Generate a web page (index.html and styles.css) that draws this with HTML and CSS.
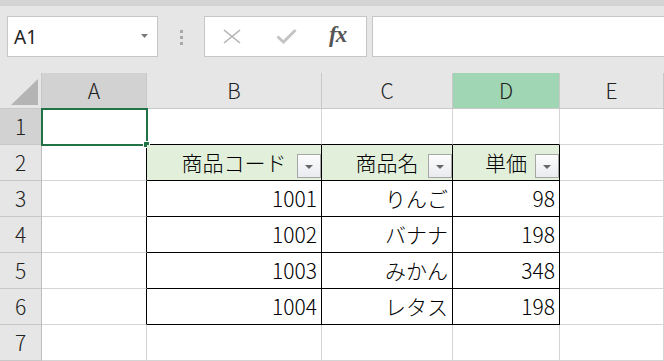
FILE: index.html
```html
<!DOCTYPE html>
<html lang="ja">
<head>
  <meta charset="UTF-8">
  <title>Sheet</title>
  <link rel="stylesheet" href="styles.css">
</head>
<body>
  <div class="app">
    <div class="topbar"></div>
    <div class="formula-row">
      <div class="namebox">
        <span>A1</span>
        <svg class="nb-arrow" width="7" height="4" viewBox="0 0 7 4"><path d="M0 0H7L3.5 4Z" fill="#7a7a7a"/></svg>
      </div>
      <div class="grip"><i></i><i></i><i></i></div>
      <div class="fbuttons">
        <svg class="ic-x" width="18" height="15" viewBox="0 0 18 15"><path d="M1 1L17 14M17 1L1 14" stroke="#b3b3b3" stroke-width="1.6" fill="none"/></svg>
        <svg class="ic-ok" width="21" height="16" viewBox="0 0 21 16"><path d="M1.5 8.5L7.5 14L19.5 2" stroke="#c4c4c4" stroke-width="3" fill="none"/></svg>
        <span class="fx">fx</span>
      </div>
      <div class="finput"></div>
    </div>

    <div class="sheet">
      <!-- column headers -->
      <div class="corner"><svg width="28" height="27" viewBox="0 0 28 27"><path d="M27 1V27H0Z" fill="#b4b4b4"/></svg></div>
      <div class="ch active">A</div>
      <div class="ch">B</div>
      <div class="ch">C</div>
      <div class="ch hl">D</div>
      <div class="ch">E</div>

      <!-- row 1 -->
      <div class="rh active">1</div>
      <div class="c a1"><span class="handle"></span></div>
      <div class="c tb"></div>
      <div class="c tb"></div>
      <div class="c tb"></div>
      <div class="c"></div>

      <!-- row 2 -->
      <div class="rh">2</div>
      <div class="c tl"></div>
      <div class="c t th">商品コード<span class="filter"></span></div>
      <div class="c t th">商品名<span class="filter"></span></div>
      <div class="c t th">単価<span class="filter"></span></div>
      <div class="c"></div>

      <!-- row 3 -->
      <div class="rh">3</div>
      <div class="c tl"></div>
      <div class="c t num">1001</div>
      <div class="c t num">りんご</div>
      <div class="c t num">98</div>
      <div class="c"></div>

      <!-- row 4 -->
      <div class="rh">4</div>
      <div class="c tl"></div>
      <div class="c t num">1002</div>
      <div class="c t num">バナナ</div>
      <div class="c t num">198</div>
      <div class="c"></div>

      <!-- row 5 -->
      <div class="rh">5</div>
      <div class="c tl"></div>
      <div class="c t num">1003</div>
      <div class="c t num">みかん</div>
      <div class="c t num">348</div>
      <div class="c"></div>

      <!-- row 6 -->
      <div class="rh">6</div>
      <div class="c tl"></div>
      <div class="c t num">1004</div>
      <div class="c t num">レタス</div>
      <div class="c t num">198</div>
      <div class="c"></div>

      <!-- row 7 -->
      <div class="rh">7</div>
      <div class="c"></div>
      <div class="c"></div>
      <div class="c"></div>
      <div class="c"></div>
      <div class="c"></div>
    </div>
  </div>
</body>
</html>
```

FILE: styles.css
```css
* {
  box-sizing: border-box;
}
body {
  margin: 0;
  background: #e6e6e6;
  font-family: "Noto Sans CJK JP", "Noto Sans", sans-serif;
  color: #000;
  overflow: hidden;
}
.app {
  width: 664px;
  height: 361px;
  overflow: hidden;
}
.topbar {
  height: 6px;
  background: #d4d4d4;
}

/* formula bar */
.formula-row {
  display: flex;
  align-items: stretch;
  height: 41px;
  margin: 10px 0 16px 7px;
}
.namebox {
  width: 151px;
  background: #fff;
  border: 1px solid #c6c6c6;
  display: flex;
  align-items: center;
  justify-content: space-between;
  padding: 0 9px 0 6px;
  font-family: "Noto Sans", sans-serif;
  font-size: 19px;
  color: #222;
}
.namebox span {
  margin-top: 1px;
}
.nb-arrow {
  margin-top: -2px;
}
.grip {
  width: 46px;
  display: flex;
  flex-direction: column;
  align-items: center;
  justify-content: center;
  gap: 3px;
  padding-top: 1px;
}
.grip i {
  display: block;
  width: 3px;
  height: 3px;
  background: #a9a9a9;
}
.fbuttons {
  width: 163px;
  background: #fff;
  border: 1px solid #c6c6c6;
  display: flex;
  align-items: center;
  padding-left: 18px;
}
.ic-x {
  margin-top: -1px;
}
.ic-ok {
  margin-left: 35px;
  margin-top: -1px;
}
.fx {
  margin-left: 32px;
  font-family: "Liberation Serif", serif;
  font-style: italic;
  font-weight: bold;
  font-size: 23px;
  color: #555;
  letter-spacing: -1px;
  margin-top: -3px;
}
.finput {
  flex: 1;
  margin-left: 5px;
  margin-right: -3px;
  background: #fff;
  border: 1px solid #c6c6c6;
}

/* sheet grid */
.sheet {
  display: grid;
  grid-template-columns: 42px 105px 175px 131px 107px 1fr;
  grid-template-rows: 36px repeat(7, 36px);
  font-size: 21px;
  font-weight: 300;
}
.corner {
  background: #e6e6e6;
  border-right: 1px solid #c8c8c8;
  border-bottom: 1px solid #c8c8c8;
  display: flex;
  align-items: flex-end;
  justify-content: flex-end;
  padding: 0 2px 3px 0;
}
.corner svg {
  display: block;
}
.ch {
  background: #e6e6e6;
  border-right: 1px solid #c8c8c8;
  border-bottom: 1px solid #c8c8c8;
  display: flex;
  align-items: center;
  justify-content: center;
  font-size: 21px;
  color: #222;
  line-height: 1;
  padding-bottom: 1px;
}
.rh {
  background: #e6e6e6;
  border-right: 1px solid #bdbdbd;
  border-bottom: 1px solid #c8c8c8;
  display: flex;
  align-items: center;
  justify-content: center;
  font-size: 21px;
  color: #222;
  line-height: 1;
}
.ch.active,
.rh.active {
  background: #d2d2d2;
}
.ch.hl {
  background: #a0d6b4;
}
.c {
  background: #fff;
  border-right: 1px solid #d4d4d4;
  border-bottom: 1px solid #d4d4d4;
  display: flex;
  align-items: center;
  line-height: 1;
  white-space: nowrap;
}
.c.tb {
  border-bottom-color: #000;
}
.c.tl {
  border-right-color: #000;
}
.c.t {
  border-right-color: #000;
  border-bottom-color: #000;
}
.c.th {
  position: relative;
  background: #e2efda;
  justify-content: center;
}
.c.num {
  justify-content: flex-end;
  padding-right: 4px;
}

/* table filter buttons */
.filter {
  position: absolute;
  right: 0;
  bottom: 2px;
  width: 24px;
  height: 24px;
  border: 1px solid #a6a6a6;
  background: linear-gradient(#fdfdfd, #e9ebef);
}
.filter::after {
  content: "";
  position: absolute;
  left: 7px;
  top: 10px;
  border-left: 4px solid transparent;
  border-right: 4px solid transparent;
  border-top: 4px solid #666;
}

/* active cell */
.c.a1 {
  position: relative;
}
.c.a1::before {
  content: "";
  position: absolute;
  left: -1px;
  top: -1px;
  right: -2px;
  bottom: -2px;
  border: 2px solid #217346;
}
.handle {
  position: absolute;
  right: -4px;
  bottom: -4px;
  width: 7px;
  height: 7px;
  background: #217346;
  border: 1px solid #fff;
}
```
